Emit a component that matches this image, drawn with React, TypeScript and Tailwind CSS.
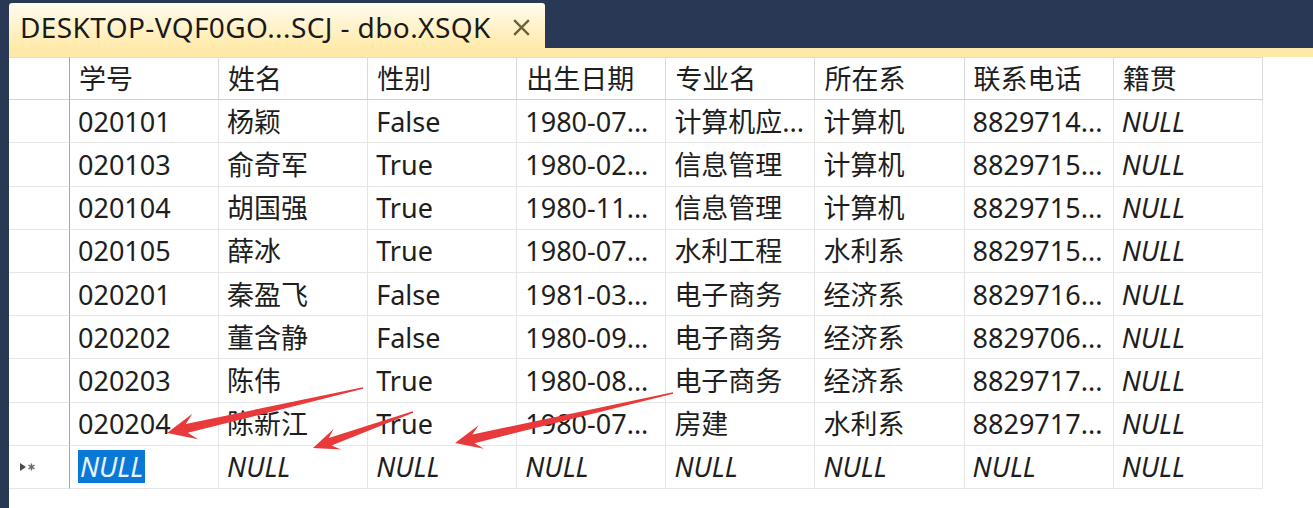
import React from 'react'

const rows = [
  ['020101', '杨颖', 'False', '1980-07...', '计算机应...', '计算机', '8829714...'],
  ['020103', '俞奇军', 'True', '1980-02...', '信息管理', '计算机', '8829715...'],
  ['020104', '胡国强', 'True', '1980-11...', '信息管理', '计算机', '8829715...'],
  ['020105', '薛冰', 'True', '1980-07...', '水利工程', '水利系', '8829715...'],
  ['020201', '秦盈飞', 'False', '1981-03...', '电子商务', '经济系', '8829716...'],
  ['020202', '董含静', 'False', '1980-09...', '电子商务', '经济系', '8829706...'],
  ['020203', '陈伟', 'True', '1980-08...', '电子商务', '经济系', '8829717...'],
  ['020204', '陈新江', 'True', '1980-07...', '房建', '水利系', '8829717...'],
]

const headers = ['学号', '姓名', '性别', '出生日期', '专业名', '所在系', '联系电话', '籍贯']

type Pt = [number, number]

// hand-drawn style red arrow, tail thin, head wide
function arrowPoints(tail: Pt, tip: Pt, headLen: number, headW: number, shaftW: number) {
  const dx = tip[0] - tail[0]
  const dy = tip[1] - tail[1]
  const len = Math.hypot(dx, dy)
  const ux = dx / len
  const uy = dy / len
  const nx = -uy
  const ny = ux
  const at = (d: number, w: number): string =>
    `${tip[0] - ux * d + nx * w},${tip[1] - uy * d + ny * w}`
  return [
    at(len, 0.8),
    at(headLen * 0.7, shaftW),
    at(headLen, headW),
    `${tip[0]},${tip[1]}`,
    at(headLen, -headW),
    at(headLen * 0.7, -shaftW),
    at(len, -0.8),
  ].join(' ')
}

function Cell({ children, className = '' }: { children?: React.ReactNode; className?: string }) {
  return (
    <div
      className={`h-[43.2px] flex items-center pl-[8px] whitespace-nowrap overflow-hidden border-r border-b border-[#e6e6e6] ${className}`}
    >
      {children}
    </div>
  )
}

export default function App() {
  return (
    <div
      className="relative w-[1313px] h-[508px] overflow-hidden bg-[#293955] pl-[9px] flex flex-col text-[#1e1e1e]"
      style={{ fontFamily: '"Noto Sans", "Noto Sans CJK SC", sans-serif' }}
    >
      {/* Tab strip */}
      <div className="h-[48px] flex items-end shrink-0">
        <div className="w-[536px] h-[45px] rounded-t-[3px] bg-gradient-to-b from-[#fffcef] to-[#ffeaa9] flex items-center pl-[11px] pr-[13px] justify-between">
          <span className="text-[28px] tracking-[0.4px] text-[#1a1a1a] leading-none pt-[2px]">
            DESKTOP-VQF0GO...SCJ - dbo.XSQK
          </span>
          <svg width="21" height="21" viewBox="0 0 20 20" className="mt-[3px]">
            <path d="M3 3 L17 17 M17 3 L3 17" stroke="#6f5f3c" strokeWidth="2.2" />
          </svg>
        </div>
      </div>
      <div className="h-[9px] bg-[#ffe9a8] shrink-0" />

      {/* Grid */}
      <div className="flex-1 bg-white">
        <div className="grid grid-cols-[61px_repeat(8,149.1px)] text-[27px] leading-none">
          <div className="h-[43.2px] border-r border-b border-r-[#a5a5a5] border-b-[#d4d4d4] border-t border-t-[#dcdcdc]" />
          {headers.map((h) => (
            <div
              key={h}
              className="h-[43.2px] flex items-center pl-[9px] border-r border-b border-t border-t-[#dcdcdc] border-r-[#dadada] border-b-[#cfcfcf]"
            >
              {h}
            </div>
          ))}
          {rows.map((r) => (
            <React.Fragment key={r[0]}>
              <div className="h-[43.2px] border-r border-b border-r-[#a5a5a5] border-b-[#e6e6e6]" />
              {r.map((v, i) => (
                <Cell key={i}>{v}</Cell>
              ))}
              <Cell className="italic">NULL</Cell>
            </React.Fragment>
          ))}
          <div className="h-[43.2px] border-r border-b border-r-[#a5a5a5] border-b-[#e6e6e6] flex items-center pl-[10px]">
            <svg width="18" height="12" viewBox="0 0 18 12">
              <path d="M1 2 L7 6 L1 10 Z" fill="#4a4a4a" />
              <path
                d="M12.5 2.5 V9.5 M9.5 4.2 L15.5 7.8 M15.5 4.2 L9.5 7.8"
                stroke="#6a6a6a"
                strokeWidth="1.4"
              />
            </svg>
          </div>
          <Cell className="italic pl-[6px]">
            <span className="bg-[#0a78d7] text-[#e8f4ff] leading-[33px] px-[2px]">NULL</span>
          </Cell>
          {Array.from({ length: 7 }).map((_, i) => (
            <Cell key={i} className="italic">
              NULL
            </Cell>
          ))}
        </div>
      </div>

      {/* annotation arrows */}
      <svg className="absolute inset-0 pointer-events-none" width="1313" height="508">
        <polygon points={arrowPoints([363, 388], [167, 433], 29, 13, 4.5)} fill="#e83a3a" />
        <polygon points={arrowPoints([413, 412], [313, 448], 26, 11, 4)} fill="#e83a3a" />
        <polygon points={arrowPoints([673, 393], [455, 443], 27, 12, 4.5)} fill="#e83a3a" />
      </svg>
    </div>
  )
}
